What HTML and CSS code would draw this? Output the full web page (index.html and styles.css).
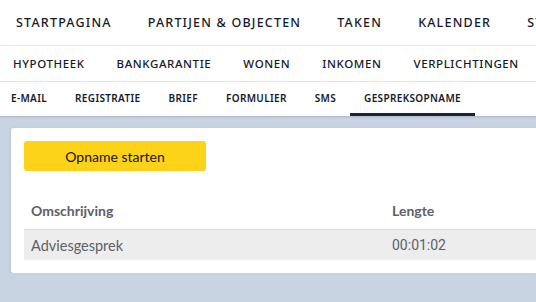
FILE: index.html
```html
<!DOCTYPE html>
<html lang="nl">
<head>
    <meta charset="UTF-8">
    <meta name="viewport" content="width=device-width, initial-scale=1.0">
    <title>Gespreksopname</title>
    <link rel="stylesheet" href="styles.css">
</head>
<body>
    <nav class="nav nav-main">
        <a class="nav-item">Startpagina</a>
        <a class="nav-item">Partijen &amp; objecten</a>
        <a class="nav-item">Taken</a>
        <a class="nav-item">Kalender</a>
        <a class="nav-item">St</a>
    </nav>
    <nav class="nav nav-sub">
        <a class="nav-item">Hypotheek</a>
        <a class="nav-item">Bankgarantie</a>
        <a class="nav-item">Wonen</a>
        <a class="nav-item">Inkomen</a>
        <a class="nav-item">Verplichtingen</a>
    </nav>
    <nav class="nav nav-tabs">
        <a class="nav-item">E-mail</a>
        <a class="nav-item">Registratie</a>
        <a class="nav-item">Brief</a>
        <a class="nav-item">Formulier</a>
        <a class="nav-item">SMS</a>
        <a class="nav-item active">Gespreksopname</a>
    </nav>

    <main class="content">
        <div class="card">
            <button class="btn-record">Opname starten</button>
            <table class="recordings">
                <thead>
                    <tr>
                        <th class="col-desc">Omschrijving</th>
                        <th>Lengte</th>
                    </tr>
                </thead>
                <tbody>
                    <tr>
                        <td class="col-desc">Adviesgesprek</td>
                        <td class="col-time">00:01:02</td>
                    </tr>
                </tbody>
            </table>
        </div>
    </main>
</body>
</html>
```

FILE: styles.css
```css
body {
    margin: 0;
    background-color: #c9d4e2;
    font-family: "Noto Sans", Arial, sans-serif;
    color: #1b2233;
    overflow: hidden;
}

.nav {
    display: flex;
    background-color: #ffffff;
    white-space: nowrap;
    overflow: hidden;
}

.nav-item {
    text-transform: uppercase;
    color: #141a2a;
    display: flex;
    align-items: center;
}

.nav-main {
    height: 45px;
    border-bottom: 1px solid #e6e6e6;
    margin-left: -2px;
}

.nav-main .nav-item {
    font-size: 12.5px;
    font-weight: 500;
    letter-spacing: 1.2px;
    padding: 0 18px;
}

.nav-sub {
    height: 35px;
    border-bottom: 1px solid #e6e6e6;
    margin-left: -3px;
}

.nav-sub .nav-item {
    font-size: 11.5px;
    font-weight: 500;
    letter-spacing: 0.6px;
    padding: 0 16px;
}

.nav-tabs {
    height: 34px;
    margin-left: -3px;
    box-shadow: 0 1px 2px rgba(0, 0, 0, 0.15);
    position: relative;
}

.nav-tabs .nav-item {
    font-size: 10px;
    font-weight: 600;
    letter-spacing: 0.35px;
    padding: 0 14px;
    border-bottom: 3px solid transparent;
}

.nav-tabs .nav-item.active {
    border-bottom-color: #17243d;
}

.content {
    padding: 12px 0 0 11px;
}

.card {
    background-color: #ffffff;
    border-radius: 3px 0 0 3px;
    box-shadow: 0 1px 4px rgba(0, 0, 0, 0.12);
    padding: 13px 0 13px 13px;
}

.btn-record {
    display: block;
    width: 182px;
    height: 30px;
    border: none;
    border-radius: 3px;
    background-color: #fdd31a;
    color: #141414;
    font-family: "Lato", "Noto Sans", Arial, sans-serif;
    font-size: 14px;
    cursor: pointer;
}

.recordings {
    width: 100%;
    border-collapse: collapse;
    margin-top: 21px;
    font-family: "Lato", "Noto Sans", Arial, sans-serif;
    color: #5c6068;
}

.recordings th {
    text-align: left;
    font-size: 14px;
    font-weight: 700;
    height: 37px;
    padding: 0 7px;
    border-bottom: 1px solid #dcdcdc;
}

.recordings td {
    height: 30px;
    font-size: 14.5px;
    padding: 0 7px;
    background-color: #ededed;
}

.recordings .col-desc {
    width: 347px;
}

.recordings .col-time {
    font-family: Roboto, Arial, sans-serif;
    font-size: 14px;
}
```
